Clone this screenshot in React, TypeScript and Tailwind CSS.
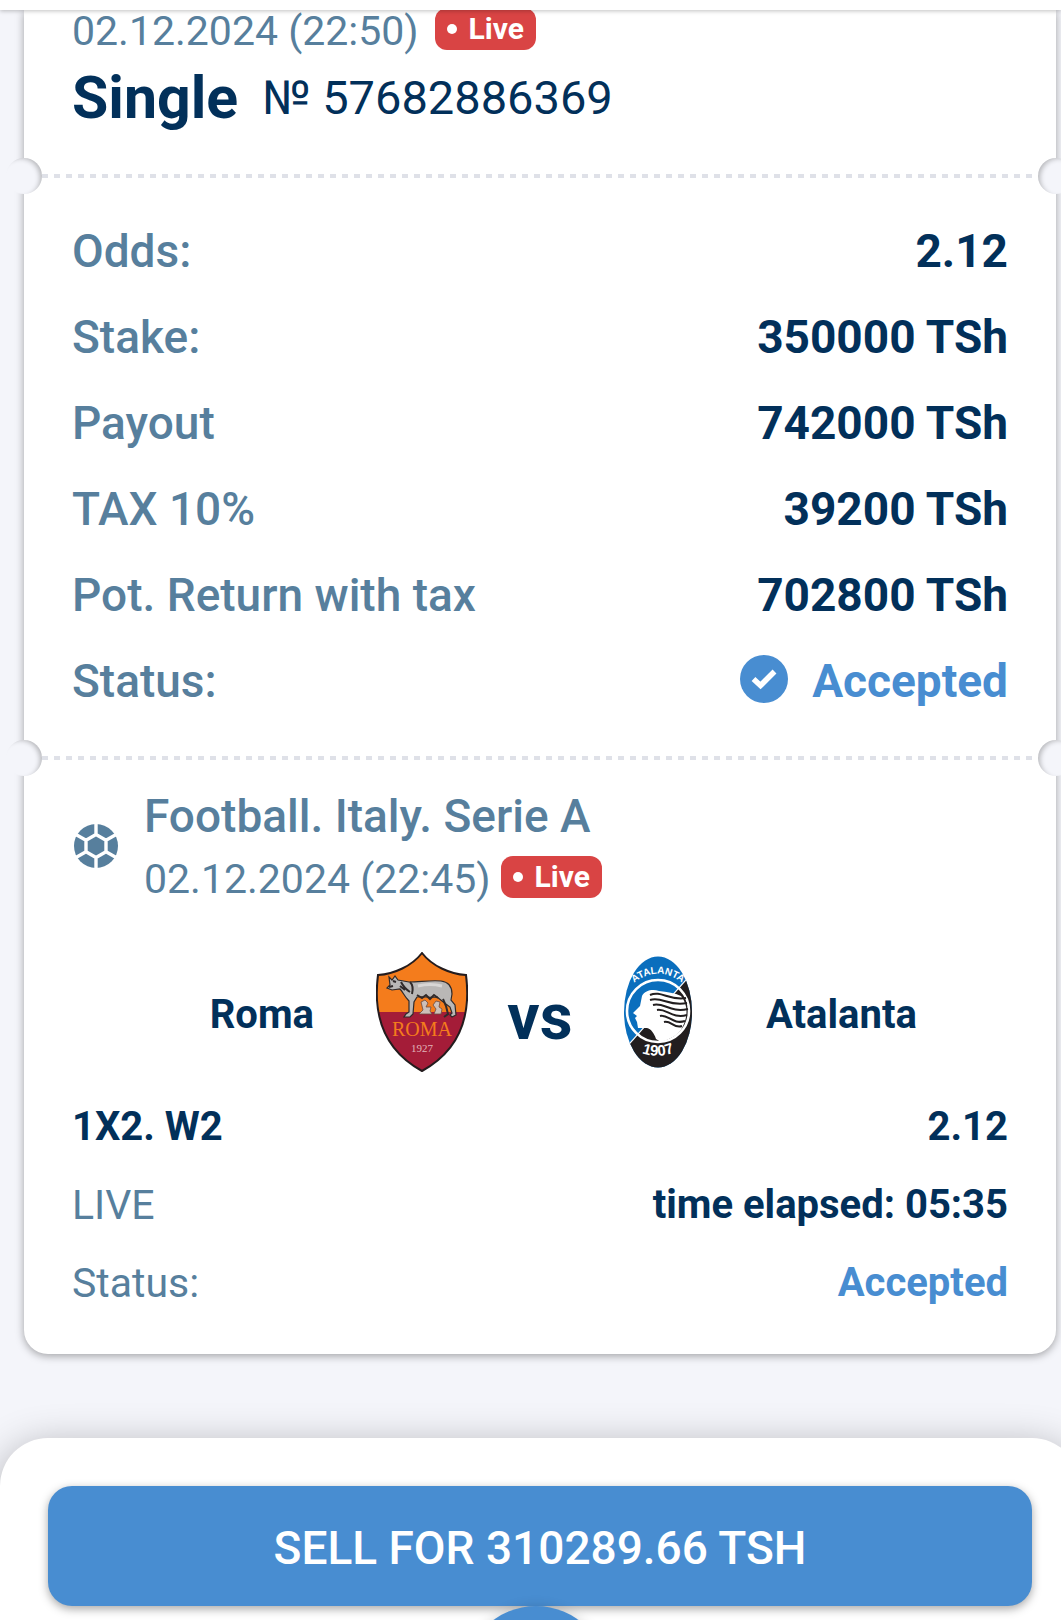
import { ReactNode } from "react";

const details = [
  { label: "Odds:", value: "2.12" },
  { label: "Stake:", value: "350000 TSh" },
  { label: "Payout", value: "742000 TSh" },
  { label: "TAX 10%", value: "39200 TSh" },
  { label: "Pot. Return with tax", value: "702800 TSh" },
];

const LiveBadge = () => {
  return (
    <span className="mb-1.5 flex h-[42px] items-center gap-3 rounded-xl bg-[#d94444] px-3 text-[30px] leading-none font-bold text-white">
      <span className="size-2.5 rounded-full bg-white"></span>
      Live
    </span>
  );
};

const Perforation = () => {
  return (
    <div className="relative flex h-9 items-center">
      <div className="absolute top-0 -left-[18px] size-9 rounded-full bg-[#f4f5fa] shadow-[inset_-4px_2px_5px_-2px_rgba(0,0,0,0.25)]"></div>
      <div className="mx-[18px] h-1 grow bg-[repeating-linear-gradient(90deg,#dfe1e8_0_6px,transparent_6px_12px)]"></div>
      <div className="absolute top-0 -right-[18px] size-9 rounded-full bg-[#f4f5fa] shadow-[inset_4px_2px_5px_-2px_rgba(0,0,0,0.25)]"></div>
    </div>
  );
};

const CheckIcon = () => {
  return (
    <svg className="mb-1 size-12" viewBox="0 0 48 48" aria-hidden="true">
      <circle cx="24" cy="24" r="24" fill="#488dd1" />
      <path d="M13.500 24 20.500 30.500 34.500 16.500" fill="none" stroke="#fff" strokeWidth="5.500" />
    </svg>
  );
};

const BallIcon = () => {
  return (
    <svg className="mb-1 h-11 w-12 shrink-0" viewBox="0 0 44 44" aria-hidden="true">
      <circle cx="22" cy="22" r="22" fill="#577f9d" />
      <path
        d="M22 10.500 32 16.200V27.800L22 33.500 12 27.800V16.200ZM22 10.500V-1M32 16.200 43 10M32 27.800 43 34M22 33.500V45M12 27.800 1 34M12 16.200 1 10"
        fill="none"
        stroke="#fff"
        strokeWidth="3.400"
      />
    </svg>
  );
};

const RomaLogo = () => {
  return (
    <svg className="h-[120px] w-[92px]" viewBox="0 0 92 120" role="img" aria-label="Roma">
      <clipPath id="roma">
        <path d="M46 1C36 14 18 22 2 23C-3 62 6 97 46 119C86 97 95 62 90 23C74 22 56 14 46 1Z" />
      </clipPath>
      <g clipPath="url(#roma)">
        <path d="M0 0H92V61H0Z" fill="#f47c1c" />
        <path d="M0 60H92V120H0Z" fill="#a41c38" />
      </g>
      <path
        d="M46 1C36 14 18 22 2 23C-3 62 6 97 46 119C86 97 95 62 90 23C74 22 56 14 46 1Z"
        fill="none"
        stroke="#241c1e"
        strokeWidth="2"
      />
      <path
        d="M13 25 16 28 19 24 22 28 33 30C44 30 54 28 65 29C73 30 76 35 76 42L75 48 79 53 80 63 76 65 74 63 76 61 74 55 66 49 61 45C54 46 46 44 41 45L38 50 37 62 34 65 28 65 30 62 33 60 33 49C28 44 27 40 24 37L16 38 11 36 14 33Z"
        fill="#b9b7b6"
        stroke="#302a2a"
        strokeWidth="1.200"
      />
      <path
        d="M67 47 70 54 72 62 68 65M25 30Q28 36 34 40M34 30Q38 34 36 42M24 34 29 38M41 43 46 46 50 43 54 47 58 43 62 46M13 35 17 34M17 29 20 30"
        fill="none"
        stroke="#302a2a"
        strokeWidth="2"
      />
      <path d="M42 34Q54 31 66 34" fill="none" stroke="#d8d6d5" strokeWidth="3" />
      <path
        d="M45 50 49 48 52 51 50 55 55 55 54 59 56 62H43L47 58ZM60 49 64 50 63 55 66 57 65 62H58L60 57 57 53Z"
        fill="#cdbfb8"
        stroke="#6b4b42"
        strokeWidth="0.800"
      />
      <text x="46" y="84" textAnchor="middle" fontFamily="Liberation Serif, serif" fontSize="20" fontWeight="400" fill="#f47c1c">
        ROMA
      </text>
      <text x="46" y="100" textAnchor="middle" fontFamily="Liberation Serif, serif" fontSize="11" fontWeight="400" fill="#e0b4ba">
        1927
      </text>
    </svg>
  );
};

const AtalantaLogo = () => {
  return (
    <svg className="h-[112px] w-[70px]" viewBox="0 0 70 112" role="img" aria-label="Atalanta">
      <clipPath id="atalanta">
        <ellipse cx="35" cy="56" rx="34" ry="55.500" />
      </clipPath>
      <path id="arch" d="M6 31Q35 4 64 31" fill="none" />
      <path id="base" d="M12 94Q35 106 58 93" fill="none" />
      <g clipPath="url(#atalanta)">
        <path d="M0 0H70V112H0Z" fill="#0a6ebd" />
        <path d="M70 16V112H0V95Z" fill="#221e1f" />
        <path d="M0 95 70 16" stroke="#fff" strokeWidth="1.200" />
        <circle cx="35" cy="55" r="31" fill="none" stroke="#fff" strokeWidth="2.600" />
        <path
          d="M19 40C22 34 30 33 36 35C44 36 52 37 58 40C66 50 64 62 60 70C56 80 46 83 38 86L33 83C31 77 28 73 24 72L15 72 14 66 12 62 14 60 10 57 17 50Z"
          fill="#fff"
        />
        <path
          d="M27 39C38 34 46 45 63 42M27 44C39 40 46 51 64 47M30 49C41 46 47 57 65 53M34 54C43 52 49 63 64 59M37 60C45 58 50 69 62 65M41 66C48 64 51 73 59 70"
          fill="none"
          stroke="#221e1f"
          strokeWidth="2"
        />
      </g>
      <text fontFamily="Liberation Sans, sans-serif" fontSize="10" fontWeight="700" fill="#fff" textAnchor="middle">
        <textPath href="#arch" startOffset="50%">ATALANTA</textPath>
      </text>
      <text fontFamily="Liberation Sans, sans-serif" fontSize="15" fontWeight="700" fill="#fff" textAnchor="middle">
        <textPath href="#base" startOffset="50%">1907</textPath>
      </text>
    </svg>
  );
};

const Row = ({ label, children }: { label: string; children: ReactNode }) => {
  return (
    <div className="flex h-[86px] items-center justify-between">
      <dt className="font-medium text-[#577f9d]">{label}</dt>
      <dd className="font-bold">{children}</dd>
    </div>
  );
};

export default function App() {
  return (
    <div className="relative h-screen overflow-hidden bg-[#f4f5fa] font-[Roboto,sans-serif] text-[#02305a]">
      <header className="relative z-10 h-2.5 bg-white shadow-[0_1px_4px_rgba(0,0,0,0.25)]"></header>

      <main className="pr-[5px] pl-6">
        <article className="rounded-b-3xl bg-white shadow-[0_2px_8px_rgba(0,0,0,0.35)]">
          <div className="h-[148px] px-12 pt-0.5">
            <div className="flex h-10 items-center gap-4 text-[41px] text-[#577f9d]">
              <span>02.12.2024 (22:50)</span>
              <LiveBadge />
            </div>
            <div className="mt-4 flex items-center gap-6 text-[47px] leading-[60px]">
              <h1 className="text-[59px] font-bold">Single</h1>
              <span>№ 57682886369</span>
            </div>
          </div>

          <Perforation />

          <dl className="px-12 pt-3.5 pb-4 text-[46px] leading-[52px]">
            {details.map((item) => (
              <Row key={item.label} label={item.label}>
                {item.value}
              </Row>
            ))}
            <Row label="Status:">
              <span className="flex items-center gap-6 text-[#488dd1]">
                <CheckIcon />
                Accepted
              </span>
            </Row>
          </dl>

          <Perforation />

          <section className="px-12 pb-8">
            <div className="flex items-center gap-6 pt-2">
              <BallIcon />
              <div>
                <h2 className="text-[46px] leading-[64px] font-medium text-[#577f9d]">Football. Italy. Serie A</h2>
                <div className="flex h-16 items-center gap-2.5 text-[41px] text-[#577f9d]">
                  <span>02.12.2024 (22:45)</span>
                  <LiveBadge />
                </div>
              </div>
            </div>

            <div className="mt-[30px] mb-1.5 flex h-[140px] items-center text-[40px] font-bold">
              <span className="flex-1 pt-1.5 pr-12 text-right">Roma</span>
              <div className="flex w-[120px] justify-center">
                <RomaLogo />
              </div>
              <span className="w-[116px] pt-3 text-center text-[64px]">vs</span>
              <div className="flex w-[120px] justify-center">
                <AtalantaLogo />
              </div>
              <span className="flex-1 pt-1.5 pl-12">Atalanta</span>
            </div>

            <dl className="text-[40px] leading-[78px]">
              <div className="flex justify-between font-bold">
                <dt>1X2. W2</dt>
                <dd>2.12</dd>
              </div>
              <div className="flex justify-between">
                <dt className="text-[41px] text-[#577f9d]">LIVE</dt>
                <dd className="font-bold">time elapsed: 05:35</dd>
              </div>
              <div className="flex justify-between">
                <dt className="text-[41px] text-[#577f9d]">Status:</dt>
                <dd className="font-bold text-[#488dd1]">Accepted</dd>
              </div>
            </dl>
          </section>
        </article>
      </main>

      <footer className="mt-[84px] -mr-[19px] rounded-t-[48px] bg-white p-12 shadow-[0_8px_40px_rgba(0,0,0,0.3)]">
        <button className="h-[120px] w-full rounded-3xl bg-[#488dd1] pt-1 text-[46px] font-medium text-white shadow-[0_3px_10px_rgba(0,0,0,0.35)]">
          SELL FOR 310289.66 TSH
        </button>
        <div className="flex justify-center pr-2">
          <div className="size-36 rounded-full bg-[#488dd1] shadow-[0_0_12px_rgba(0,0,0,0.15)]"></div>
        </div>
      </footer>
    </div>
  );
}
